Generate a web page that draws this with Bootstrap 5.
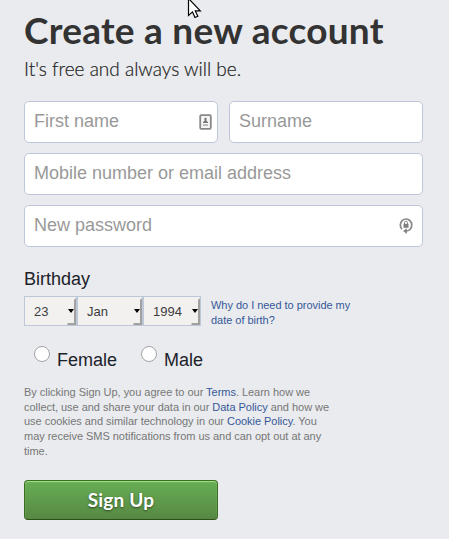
<!DOCTYPE html>
<html lang="en">
<head>
<meta charset="utf-8">
<meta name="viewport" content="width=device-width, initial-scale=1">
<title>Create a new account</title>
<link href="https://cdn.jsdelivr.net/npm/bootstrap@5.3.0/dist/css/bootstrap.min.css" rel="stylesheet">
<style>
body{background:#e9ebee;font-family:"Liberation Sans",sans-serif;color:#1d2129;height:539px;overflow:hidden}
.signup{width:423px;padding:8px 0 0 24px}
.title{font:700 37px/44px Lato,sans-serif;color:#333;white-space:nowrap;letter-spacing:.25px}
.subtitle{font:300 19px/26px Lato,sans-serif;color:#222;-webkit-text-stroke:.2px #222;margin-top:4px;white-space:nowrap}
.fields{margin-top:19px;gap:10px}
.name-row{gap:11px}
.field.form-control{height:42px;border:1px solid #bdc7d8;border-radius:5px;padding:0 9px 2px;font-size:18px;line-height:24px;color:#333;background:#fff;box-shadow:none}
.field::placeholder{color:#999;opacity:1}
.field-icon{right:6px;top:13px}
.pw-icon{right:9px;top:12px}
.section-label{font-size:18px;line-height:22px;margin-top:21px}
.birth-row{margin-top:6px}
.dates{width:177px;height:30px;border:1px solid #bdc7d8;background:#bdc7d8;gap:2px}
.date-btn{height:28px;border:0;border-radius:0;background:#f2f1f0;font-size:13px;line-height:16px;color:#3c3c3c;padding:1px 0 0 9px;text-align:left}
.date-btn::before{content:"";position:absolute;right:0;top:1px;bottom:0;width:9px;background:#a0a0a0;clip-path:polygon(100% 0,100% 100%,0 100%,1px calc(100% - 2px),calc(100% - 2px) calc(100% - 2px),calc(100% - 2px) 2px)}
.date-btn::after{content:"";position:absolute;right:2px;top:12px;border:3px solid transparent;border-top:4px solid #000;border-bottom:0}
.day{width:51px}.month{width:64px}.year{width:56px}
.why{font-size:11px;line-height:15px;margin:2px 0 0 10px;width:150px;letter-spacing:-.03px}
.signup a{color:#365899;text-decoration:none}
.gender{margin-top:17px;padding-left:10px;height:30px}
.choice{font-size:18px;line-height:30px}
.radio.form-check-input{width:16px;height:16px;margin:1px 7px 0 0;border:1px solid #a3a3a3;background:#fff}
.male{margin-left:24px}
.terms{font-size:11px;line-height:14.7px;color:#777;margin-top:10px;white-space:nowrap;letter-spacing:-.03px}
.submit.btn{width:194px;height:40px;margin-top:21px;padding:0;border:1px solid #3b6e22;border-bottom-color:#2c5115;border-radius:4px;background:linear-gradient(#67ae55,#578843);box-shadow:inset 0 1px 1px #a4e388;color:#fff;font:700 19px/36px Lato,sans-serif;letter-spacing:.2px;text-shadow:0 1px 2px rgba(0,0,0,.5)}
.pointer-arrow{left:187px;top:-3px}
</style>
<script src="https://cdn.jsdelivr.net/npm/bootstrap@5.3.0/dist/js/bootstrap.bundle.min.js"></script>
</head>
<body>
<main class="signup">
<h1 class="title mb-0">Create a new account</h1>
<p class="subtitle mb-0">It's free and always will be.</p>
<form>
<div class="fields d-flex flex-column">
<div class="name-row d-flex">
<div class="position-relative flex-fill w-50"><input class="field form-control" placeholder="First name" aria-label="First name">
<svg class="field-icon position-absolute" width="13" height="16" viewBox="0 0 13 16"><rect x="1.2" y="1.2" width="10.6" height="13.6" rx="1" fill="#f5f5f5" stroke="#888" stroke-width="1.8"/><circle cx="6.5" cy="5" r="1.2" fill="#777"/><path d="M6 6h1l2 2.2V9H4v-.8z" fill="#777"/><path d="M4 10.3h5v1.5H4z" fill="#aaa"/></svg></div>
<div class="flex-fill w-50"><input class="field form-control" placeholder="Surname" aria-label="Surname"></div>
</div>
<input class="field form-control" placeholder="Mobile number or email address" aria-label="Mobile number or email address">
<div class="position-relative"><input type="password" class="field form-control" placeholder="New password" aria-label="New password">
<svg class="pw-icon position-absolute" width="15" height="18" viewBox="0 0 15 18"><path d="M2.8 12.2A5.7 6.1 0 1 1 11 12.5Q9.5 14 7 14" fill="none" stroke="#888" stroke-width="1.7"/><path d="M4.2 14l3.6-2.7v5.6z" fill="#808080"/><path d="M5.5 7V5.7a1.5 1.5 0 0 1 3 0V7" fill="none" stroke="#888"/><rect x="4.5" y="6.8" width="5" height="4" fill="#808080"/></svg></div>
</div>
<div class="section-label">Birthday</div>
<div class="birth-row d-flex">
<div class="dates d-flex flex-shrink-0">
<button type="button" class="btn date-btn day position-relative">23</button>
<button type="button" class="btn date-btn month position-relative">Jan</button>
<button type="button" class="btn date-btn year position-relative">1994</button>
</div>
<a href="#" class="why flex-shrink-0">Why do I need to provide my<br>date of birth?</a>
</div>
<div class="gender d-flex">
<label class="choice d-flex"><input class="radio form-check-input" type="radio" name="sex"><span>Female</span></label>
<label class="choice male d-flex"><input class="radio form-check-input" type="radio" name="sex"><span>Male</span></label>
</div>
<p class="terms mb-0">By clicking Sign Up, you agree to our <a href="#">Terms</a>. Learn how we<br>collect, use and share your data in our <a href="#">Data Policy</a> and how we<br>use cookies and similar technology in our <a href="#">Cookie Policy</a>. You<br>may receive SMS notifications from us and can opt out at any<br>time.</p>
<button type="button" class="submit btn d-block">Sign Up</button>
</form>
</main>
<svg class="pointer-arrow position-absolute" width="15" height="23" viewBox="0 0 15 23"><path d="M1.5 1.5v17l4-3.6 2.5 5.6 2.8-1.2-2.5-5.4h5z" fill="#fff" stroke="#000" stroke-width="1.2"/></svg>
</body>
</html>
